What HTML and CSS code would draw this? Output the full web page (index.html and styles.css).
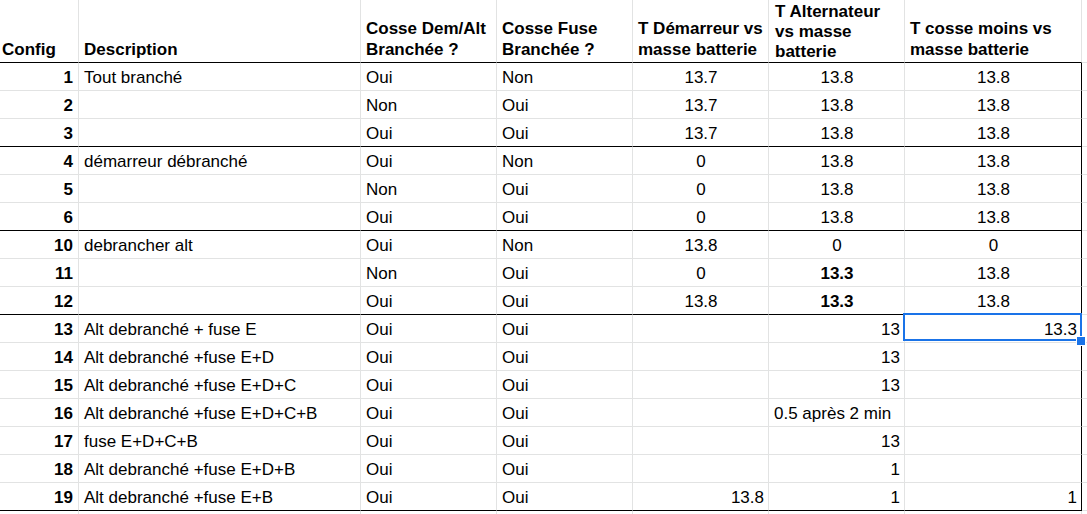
FILE: index.html
```html
<!DOCTYPE html>
<html lang="fr">
<head>
<meta charset="utf-8">
<title>Config</title>
<link rel="stylesheet" href="styles.css">
</head>
<body>
<div class="sheet">
  <div class="row head">
    <div class="c first"><span>Config</span></div>
    <div class="c"><span>Description</span></div>
    <div class="c"><span>Cosse Dem/Alt<br>Branchée ?</span></div>
    <div class="c"><span>Cosse Fuse<br>Branchée ?</span></div>
    <div class="c"><span>T Démarreur vs<br>masse batterie</span></div>
    <div class="c tall"><span>T Alternateur<br>vs masse<br>batterie</span></div>
    <div class="c"><span>T cosse moins vs<br>masse batterie</span></div>
    <div class="c x"></div>
  </div>

  <div class="row">
    <div class="c idx">1</div><div class="c">Tout branché</div><div class="c">Oui</div><div class="c">Non</div>
    <div class="c mid">13.7</div><div class="c mid">13.8</div><div class="c mid edge">13.8</div><div class="c x"></div>
  </div>
  <div class="row">
    <div class="c idx">2</div><div class="c"></div><div class="c">Non</div><div class="c">Oui</div>
    <div class="c mid">13.7</div><div class="c mid">13.8</div><div class="c mid edge">13.8</div><div class="c x"></div>
  </div>
  <div class="row grp">
    <div class="c idx">3</div><div class="c"></div><div class="c">Oui</div><div class="c">Oui</div>
    <div class="c mid">13.7</div><div class="c mid">13.8</div><div class="c mid edge">13.8</div><div class="c x"></div>
  </div>

  <div class="row">
    <div class="c idx">4</div><div class="c">démarreur débranché</div><div class="c">Oui</div><div class="c">Non</div>
    <div class="c mid">0</div><div class="c mid">13.8</div><div class="c mid edge">13.8</div><div class="c x"></div>
  </div>
  <div class="row">
    <div class="c idx">5</div><div class="c"></div><div class="c">Non</div><div class="c">Oui</div>
    <div class="c mid">0</div><div class="c mid">13.8</div><div class="c mid edge">13.8</div><div class="c x"></div>
  </div>
  <div class="row grp">
    <div class="c idx">6</div><div class="c"></div><div class="c">Oui</div><div class="c">Oui</div>
    <div class="c mid">0</div><div class="c mid">13.8</div><div class="c mid edge">13.8</div><div class="c x"></div>
  </div>

  <div class="row">
    <div class="c idx">10</div><div class="c">debrancher alt</div><div class="c">Oui</div><div class="c">Non</div>
    <div class="c mid">13.8</div><div class="c mid">0</div><div class="c mid edge">0</div><div class="c x"></div>
  </div>
  <div class="row">
    <div class="c idx">11</div><div class="c"></div><div class="c">Non</div><div class="c">Oui</div>
    <div class="c mid">0</div><div class="c mid bold">13.3</div><div class="c mid edge">13.8</div><div class="c x"></div>
  </div>
  <div class="row grp">
    <div class="c idx">12</div><div class="c"></div><div class="c">Oui</div><div class="c">Oui</div>
    <div class="c mid">13.8</div><div class="c mid bold">13.3</div><div class="c mid edge">13.8</div><div class="c x"></div>
  </div>

  <div class="row">
    <div class="c idx">13</div><div class="c">Alt debranché + fuse E</div><div class="c">Oui</div><div class="c">Oui</div>
    <div class="c"></div><div class="c end">13</div><div class="c end edge sel">13.3<span class="selbox"></span><span class="handle"></span></div><div class="c x"></div>
  </div>
  <div class="row">
    <div class="c idx">14</div><div class="c">Alt debranché +fuse E+D</div><div class="c">Oui</div><div class="c">Oui</div>
    <div class="c"></div><div class="c end">13</div><div class="c edge"></div><div class="c x"></div>
  </div>
  <div class="row">
    <div class="c idx">15</div><div class="c">Alt debranché +fuse E+D+C</div><div class="c">Oui</div><div class="c">Oui</div>
    <div class="c"></div><div class="c end">13</div><div class="c edge"></div><div class="c x"></div>
  </div>
  <div class="row">
    <div class="c idx">16</div><div class="c">Alt debranché +fuse E+D+C+B</div><div class="c">Oui</div><div class="c">Oui</div>
    <div class="c"></div><div class="c">0.5 après 2 min</div><div class="c edge"></div><div class="c x"></div>
  </div>
  <div class="row">
    <div class="c idx">17</div><div class="c">fuse E+D+C+B</div><div class="c">Oui</div><div class="c">Oui</div>
    <div class="c"></div><div class="c end">13</div><div class="c edge"></div><div class="c x"></div>
  </div>
  <div class="row">
    <div class="c idx">18</div><div class="c">Alt debranché +fuse E+D+B</div><div class="c">Oui</div><div class="c">Oui</div>
    <div class="c"></div><div class="c end">1</div><div class="c edge"></div><div class="c x"></div>
  </div>
  <div class="row grp">
    <div class="c idx">19</div><div class="c">Alt debranché +fuse E+B</div><div class="c">Oui</div><div class="c">Oui</div>
    <div class="c end">13.8</div><div class="c end">1</div><div class="c end edge">1</div><div class="c x"></div>
  </div>

  <div class="row">
    <div class="c"></div><div class="c"></div><div class="c"></div><div class="c"></div>
    <div class="c"></div><div class="c"></div><div class="c"></div><div class="c x"></div>
  </div>
</div>
</body>
</html>
```

FILE: styles.css
```css
html, body {
  margin: 0;
  padding: 0;
  background: #ffffff;
}

body {
  font-family: "Liberation Sans", Arial, sans-serif;
  font-size: 17px;
  color: #000000;
  overflow: hidden;
}

.sheet {
  display: flex;
  flex-direction: column;
  width: 1087px;
}

.row {
  display: grid;
  grid-template-columns: 79px 282px 136px 136px 136px 136px 177px 1fr;
  height: 28px;
}

.row.head {
  height: 63px;
}

.c {
  box-sizing: border-box;
  display: flex;
  flex-direction: column;
  justify-content: flex-end;
  align-items: flex-start;
  padding: 0 4px 2px 5px;
  line-height: 21px;
  border-right: 1px solid #e2e3e3;
  border-bottom: 1px solid #e2e3e3;
  white-space: nowrap;
  position: relative;
}

.c.first {
  padding-left: 2px;
}

.head .c {
  font-weight: bold;
  border-bottom-color: #000000;
}

.head .c.tall {
  line-height: 20px;
  padding-bottom: 0;
  padding-left: 6px;
}

.head .c.x,
.row .c.x {
  border-bottom-color: #e2e3e3;
  border-right: none;
}

.grp .c {
  border-bottom-color: #000000;
}

.idx {
  font-weight: bold;
  align-items: flex-end;
  padding-right: 5px;
}

.mid {
  align-items: center;
}

.end {
  align-items: flex-end;
}

.bold {
  font-weight: bold;
}

.edge {
  border-right-color: #000000;
}

.selbox {
  position: absolute;
  top: -2px;
  left: -2px;
  right: -1px;
  bottom: 1px;
  border: 2px solid #1a73e8;
  z-index: 1;
}

.handle {
  position: absolute;
  right: -5px;
  bottom: -4px;
  width: 8px;
  height: 8px;
  background: #1a73e8;
  border: 1px solid #ffffff;
  z-index: 2;
}
```
